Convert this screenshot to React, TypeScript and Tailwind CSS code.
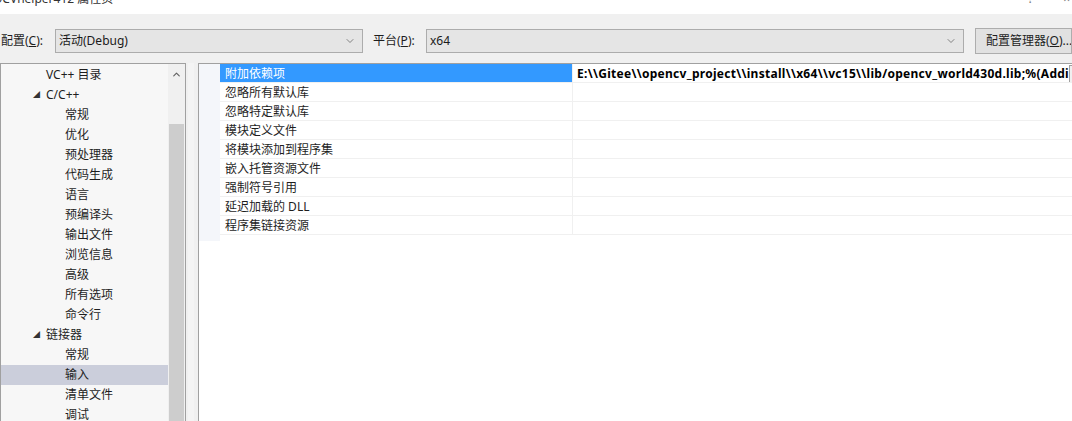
import { ChevronDown, ChevronUp } from 'lucide-react';

const treeItems: { label: string; level: 1 | 2; open?: boolean; selected?: boolean }[] = [
  { label: 'VC++ 目录', level: 1 },
  { label: 'C/C++', level: 1, open: true },
  { label: '常规', level: 2 },
  { label: '优化', level: 2 },
  { label: '预处理器', level: 2 },
  { label: '代码生成', level: 2 },
  { label: '语言', level: 2 },
  { label: '预编译头', level: 2 },
  { label: '输出文件', level: 2 },
  { label: '浏览信息', level: 2 },
  { label: '高级', level: 2 },
  { label: '所有选项', level: 2 },
  { label: '命令行', level: 2 },
  { label: '链接器', level: 1, open: true },
  { label: '常规', level: 2 },
  { label: '输入', level: 2, selected: true },
  { label: '清单文件', level: 2 },
  { label: '调试', level: 2 },
];

const props = [
  { name: '附加依赖项', value: 'E:\\\\Gitee\\\\opencv_project\\\\install\\\\x64\\\\vc15\\\\lib/opencv_world430d.lib;%(Addi' },
  { name: '忽略所有默认库', value: '' },
  { name: '忽略特定默认库', value: '' },
  { name: '模块定义文件', value: '' },
  { name: '将模块添加到程序集', value: '' },
  { name: '嵌入托管资源文件', value: '' },
  { name: '强制符号引用', value: '' },
  { name: '延迟加载的 DLL', value: '' },
  { name: '程序集链接资源', value: '' },
];

const font = "font-['Segoe_UI','Noto_Sans','Noto_Sans_CJK_SC',sans-serif]";

function Combo({ value, width }: { value: string; width: string }) {
  return (
    <div className={`${width} shrink-0 h-[24px] flex items-center justify-between border border-[#acacac] bg-[#e5e5e5] pl-[3px] pr-[6px]`}>
      <span className="text-[12px] text-[#1a1a1a]">{value}</span>
      <ChevronDown className="h-[12px] w-[12px] text-[#606060]" strokeWidth={1.5} />
    </div>
  );
}

export default function App() {
  return (
    <div className={`w-[1072px] h-[421px] overflow-hidden bg-[#f0f0f0] flex flex-col ${font} text-[#1e1e1e]`}>
      {/* title bar, mostly cropped */}
      <div className="h-[14px] bg-white overflow-hidden flex justify-between shrink-0">
        <span className="-mt-[10px] -ml-[7px] text-[12px] text-[#333] whitespace-nowrap">OCVhelper412 属性页</span>
        <div className="flex gap-[30px] pr-[2px] -mt-[10px] text-[12px] text-[#777]">
          <span>?</span>
          <span>×</span>
        </div>
      </div>

      {/* configuration row */}
      <div className="flex items-center h-[26px] mt-[14px] shrink-0">
        <span className="text-[12px] w-[55px] shrink-0 pl-[1px] whitespace-nowrap">
          配置(<span className="underline">C</span>):
        </span>
        <Combo value="活动(Debug)" width="w-[308px]" />
        <span className="text-[12px] ml-[10px] w-[53px] shrink-0 whitespace-nowrap">
          平台(<span className="underline">P</span>):
        </span>
        <Combo value="x64" width="w-[538px]" />
        <div className="ml-[11px] h-[26px] flex-1 border border-[#adadad] bg-[#e1e1e1] flex items-center pl-[10px] text-[12px] whitespace-nowrap overflow-hidden">
          配置管理器(<span className="underline">O</span>)...
        </div>
      </div>

      {/* panels */}
      <div className="flex mt-[9px] flex-1 min-h-0">
        {/* tree */}
        <div className="w-[186px] shrink-0 border-l border-t border-r border-[#a0a0a0] bg-[#f7f7f7] flex overflow-hidden">
          <div className="flex-1 min-w-0 flex flex-col pt-[1px]">
            {treeItems.map((item, i) => (
              <div
                key={i}
                className={`h-[20px] flex items-center text-[12px] shrink-0 whitespace-nowrap ${item.selected ? 'bg-[#cbcedb]' : ''}`}
              >
                <span className="w-[32px] shrink-0" />
                <span className="w-[13px] shrink-0 text-[7px] text-[#333]">{item.open ? '◢' : ''}</span>
                {item.level === 2 && <span className="w-[19px] shrink-0" />}
                <span>{item.label}</span>
              </div>
            ))}
          </div>
          {/* scrollbar */}
          <div className="w-[17px] shrink-0 bg-[#f0f0f0] flex flex-col">
            <div className="h-[20px] flex items-center justify-center">
              <ChevronUp className="h-[11px] w-[11px] text-[#606060]" strokeWidth={2.5} />
            </div>
            <div className="mt-[40px] flex-1 bg-[#cdcdcd] mx-[1px]" />
          </div>
        </div>

        <div className="w-[12px] shrink-0 flex">
          <div className="ml-[2px] w-[6px] bg-[#f4f4f4]" />
        </div>

        {/* property grid */}
        <div className="flex-1 min-w-0 border-l border-t border-[#a0a0a0] bg-white flex flex-col">
          {props.map((p, i) => (
            <div key={i} className="h-[19px] flex shrink-0">
              <div className="w-[21px] shrink-0 bg-[#f4f6fa]" />
              <div
                className={`w-[352px] shrink-0 flex items-center pl-[5px] pt-[1px] text-[12px] whitespace-nowrap border-b border-[#f0f0f0] ${
                  i === 0 ? 'bg-[#3399ff] text-white' : ''
                }`}
              >
                {p.name}
              </div>
              <div className="flex-1 min-w-0 flex items-center pl-[4px] pt-[1px] border-l border-b border-[#f0f0f0] overflow-hidden">
                <span className="text-[12px] font-bold text-black whitespace-nowrap tracking-[0.28px]">{p.value}</span>
                {i === 0 && <div className="ml-auto h-[18px] w-[4px] shrink-0 border-l border-y border-[#a0a0a0] bg-[#f0f0f0]" />}
              </div>
            </div>
          ))}
          <div className="flex-1 flex">
            <div className="w-[21px] h-[6px] bg-[#f4f6fa]" />
          </div>
        </div>
      </div>
    </div>
  );
}
